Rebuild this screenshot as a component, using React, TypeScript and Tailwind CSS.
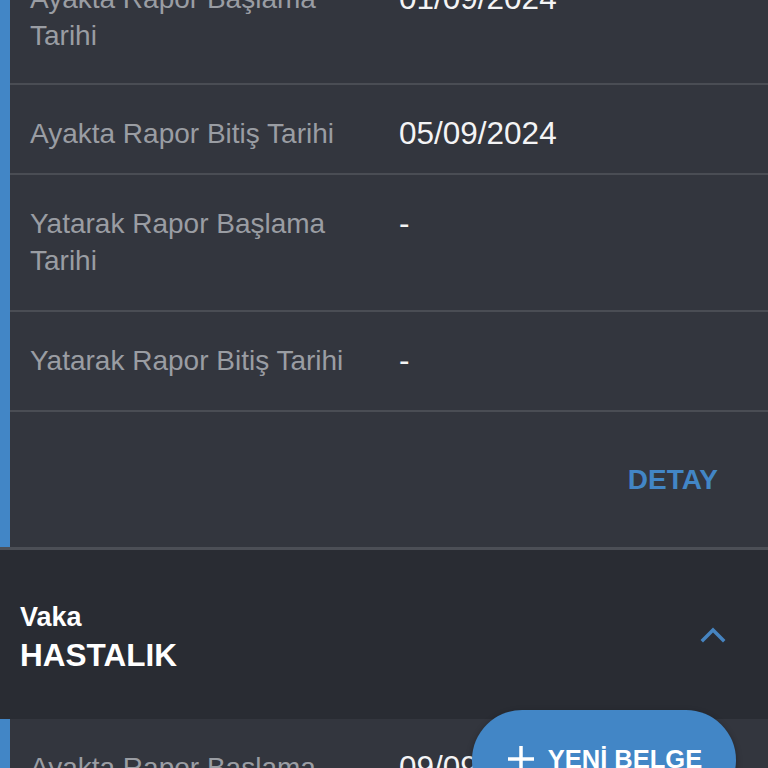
import React from "react";

type Row = { label: string; value: string; pb?: string };

const firstCard: Row[] = [
  { label: "Ayakta Rapor Başlama Tarihi", value: "01/09/2024" },
  { label: "Ayakta Rapor Bitiş Tarihi", value: "05/09/2024", pb: "pb-[21px]" },
  { label: "Yatarak Rapor Başlama Tarihi", value: "-", pb: "pb-[31px]" },
  { label: "Yatarak Rapor Bitiş Tarihi", value: "-", pb: "pb-[31px]" },
];

const InfoRow = ({ row }: { row: Row }) => (
  <div
    className={`flex border-b-2 border-[#4a4d54] pt-[30px] ${row.pb ?? "pb-[29px]"}`}
  >
    <div className="w-[389px] shrink-0 pl-[20px] pr-[40px] text-[28px] leading-[37px] text-[#9a9da3]">
      {row.label}
    </div>
    <div className="text-[31.5px] leading-[37px] text-[#f4f4f5]">{row.value}</div>
  </div>
);

const ChevronUp = () => (
  <svg width="26" height="18" viewBox="0 0 26 18" fill="none">
    <path
      d="M3 15 L13 5 L23 15"
      stroke="#4684c0"
      strokeWidth="3.5"
      strokeLinecap="square"
    />
  </svg>
);

const Plus = () => (
  <svg width="30" height="30" viewBox="0 0 30 30">
    <path d="M15 2 V28 M2 15 H28" stroke="#ffffff" strokeWidth="3.5" />
  </svg>
);

export default function App() {
  return (
    <div
      className="relative h-[768px] w-[768px] overflow-hidden bg-[#292c33]"
      style={{ fontFamily: '"Liberation Sans", Arial, sans-serif' }}
    >
      {/* report card */}
      <div className="-mt-[50px] flex bg-[#33363e]">
        <div className="w-[10px] shrink-0 bg-[#4286c6]" />
        <div className="flex-1">
          {firstCard.map((row, i) => (
            <InfoRow key={i} row={row} />
          ))}
          <div className="flex h-[135px] items-center justify-end pr-[50px]">
            <span className="text-[28px] font-bold text-[#4286c6]">DETAY</span>
          </div>
        </div>
      </div>
      <div className="h-[3px] bg-[#4c4f56]" />

      {/* vaka header */}
      <div className="flex h-[167px] items-center justify-between bg-[#292c33] pl-[20px] pr-[42px]">
        <div className="pt-[6px] text-white">
          <div className="text-[27px] font-bold leading-[36px]">Vaka</div>
          <div className="text-[31.5px] font-bold leading-[40px]">HASTALIK</div>
        </div>
        <ChevronUp />
      </div>

      {/* next card */}
      <div className="mt-[2px] flex bg-[#33363e]">
        <div className="w-[10px] shrink-0 bg-[#4286c6]" />
        <div className="flex-1">
          <InfoRow row={{ label: "Ayakta Rapor Başlama Tarihi", value: "09/09/2024" }} />
        </div>
      </div>

      {/* floating action button */}
      <button className="absolute left-[472px] top-[710px] flex h-[100px] w-[264px] items-start justify-center gap-[12px] rounded-[50px] bg-[#4286c6] pt-[34px] shadow-[0_2px_6px_rgba(0,0,0,0.3)]">
        <Plus />
        <span className="text-[25.5px] font-bold leading-[30px] text-white">
          YENİ BELGE
        </span>
      </button>
    </div>
  );
}
